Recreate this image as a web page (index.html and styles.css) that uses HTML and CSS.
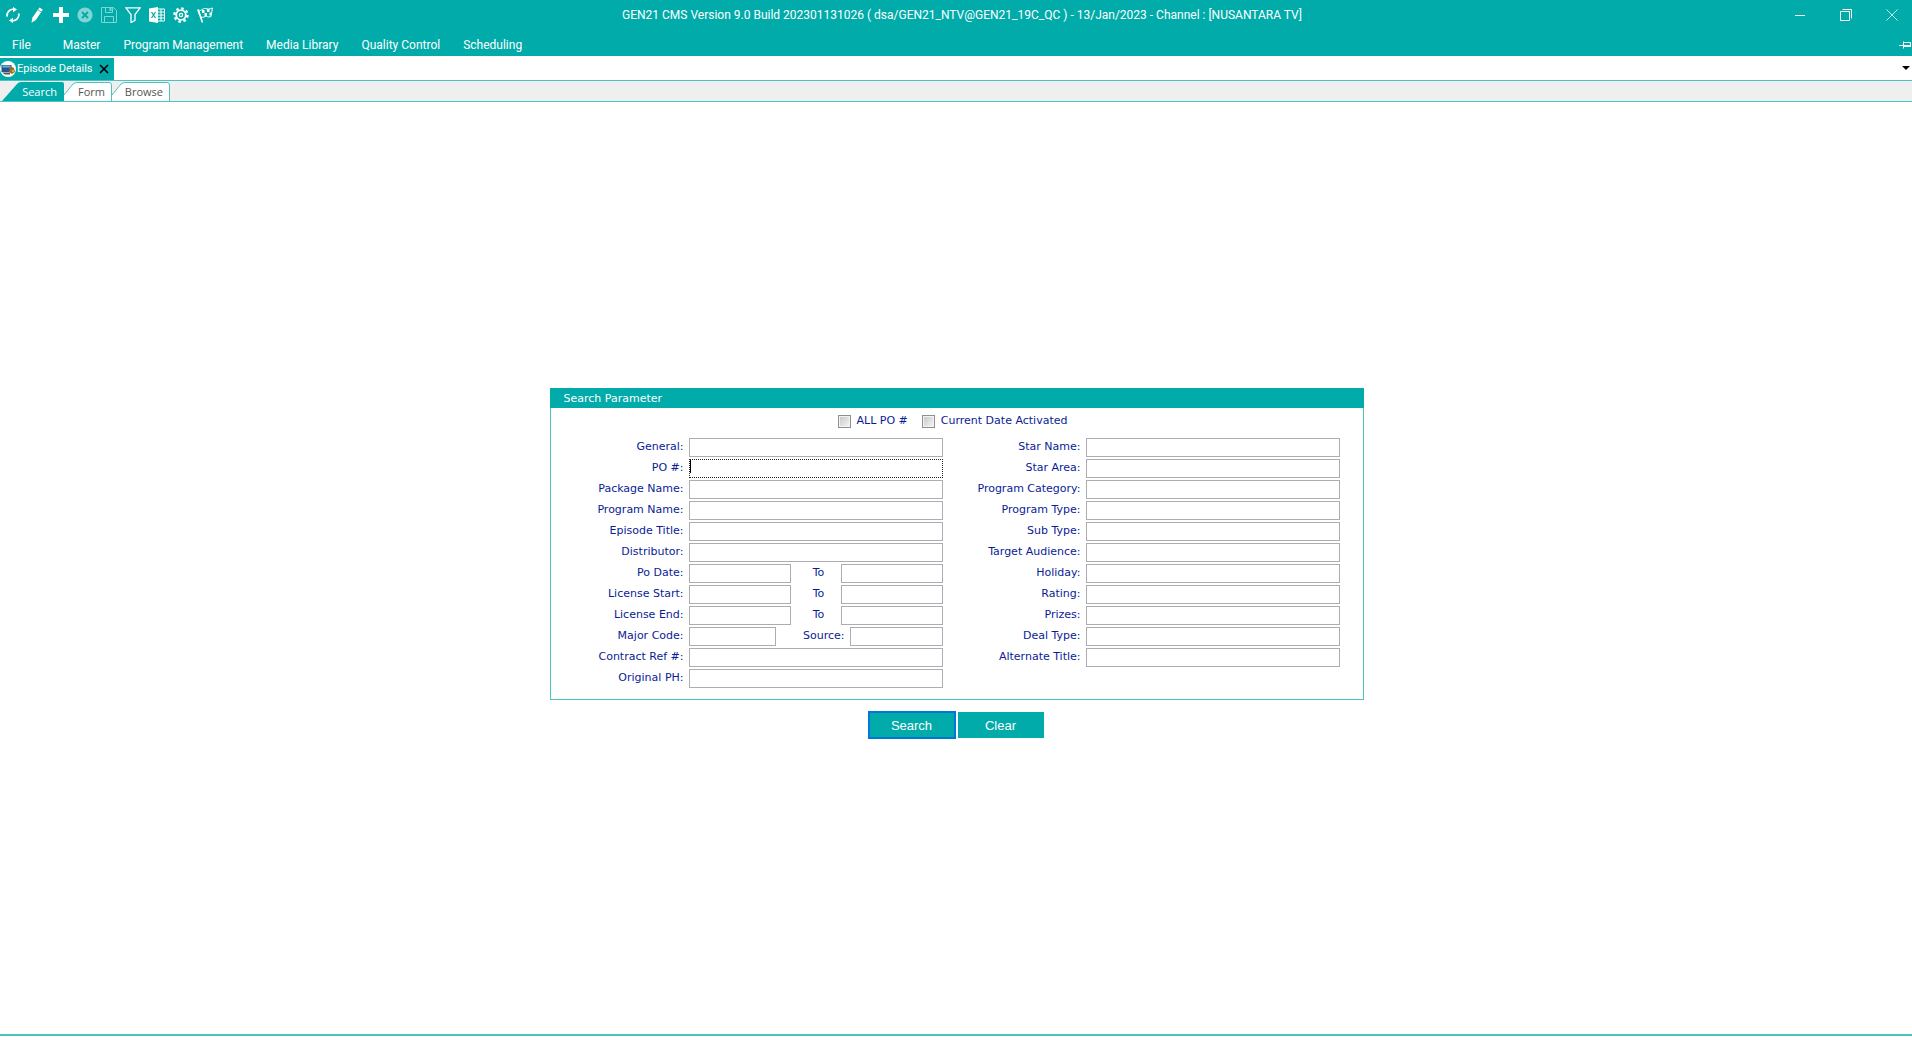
FILE: index.html
```html
<!DOCTYPE html>
<html lang="en">
<head>
<meta charset="utf-8">
<title>GEN21 CMS</title>
<link rel="stylesheet" href="styles.css">
</head>
<body>
<header class="app-header">
  <div class="title-bar">
    <div class="toolbar">
      <button class="tool" aria-label="Refresh"><svg viewBox="0 0 16 16"><path d="M2.2 9.6A6 6 0 0 1 8.6 2.3M13.8 6.4A6 6 0 0 1 7.4 13.7" fill="none" stroke="#fff" stroke-width="1.7"/><path d="M8 0l4 2.6L8 5.3zM8 10.7v5.3L4 13.4z" fill="#fff"/></svg></button>
      <button class="tool" aria-label="Edit"><svg viewBox="0 0 16 16"><path d="M10.500.5l3.300 2.200-7 10.200-4.300 2.800.8-5z" fill="#fff"/><path d="M9 2.800l3.400 2.300" stroke="#00abaa" stroke-width=".8"/></svg></button>
      <button class="tool" aria-label="Add"><svg viewBox="0 0 16 16"><path d="M6 0h4v6h6v4h-6v6H6v-6H0V6h6z" fill="#fff"/></svg></button>
      <button class="tool" aria-label="Cancel" disabled><svg viewBox="0 0 16 16"><circle cx="8" cy="8" r="7.6" fill="#7fd5d4"/><path d="M5 5l6 6M11 5l-6 6" stroke="#00abaa" stroke-width="1.8"/></svg></button>
      <button class="tool" aria-label="Save" disabled><svg viewBox="0 0 16 16" fill="none" stroke="#7fd5d4"><path d="M.5.5h12l3 3v12H.5zM4.500.5v5h7v-5M3.500 15.500v-6h9v6"/><path d="M9.500 1v3" stroke-width="2"/></svg></button>
      <button class="tool" aria-label="Filter"><svg viewBox="0 0 16 16"><path d="M.8.8h14.400L10 7.500v5.800l-4 2.200V7.500z" fill="none" stroke="#fff" stroke-width="1.300"/></svg></button>
      <button class="tool" aria-label="Export to Excel"><svg viewBox="0 0 16 16"><path d="M0 1.500L9 0v16l-9-1.500z" fill="#fff"/><path d="M2.500 5l4 6M6.500 5l-4 6" stroke="#00abaa" stroke-width="1.300"/><path d="M9 2h6.500v12H9M9 5h6M9 8h6M9 11h6M12 2v12" fill="none" stroke="#fff"/></svg></button>
      <button class="tool" aria-label="Settings"><svg viewBox="0 0 16 16" fill="none" stroke="#fff"><circle cx="8" cy="8" r="6.600" stroke-width="2.400" stroke-dasharray="2.600 2.580"/><circle cx="8" cy="8" r="4.800" stroke-width="1.800"/><circle cx="8" cy="8" r="1.600" stroke-width="1.200"/></svg></button>
      <button class="tool" aria-label="Finish"><svg viewBox="0 0 16 16" fill="none" stroke="#fff"><path d="M.8 2.500L5.500 15.500" stroke-width="1.600"/><path d="M1.500 3c3 1.500 4-2 7-1.500s3 1 7-.5l-1.500 8.500c-3 1.500-4-1-6 0s-2 1-4 .5z"/><path d="M5 3h2.500v3H5zM10 2h2.500v3H10zM7.500 6H10v3H7.500zM12.500 5.500H14v3h-1.500z" fill="#fff" stroke="none"/></svg></button>
    </div>
    <h1 class="app-title">GEN21 CMS Version 9.0 Build 202301131026 ( dsa/GEN21_NTV@GEN21_19C_QC ) - 13/Jan/2023 - Channel : [NUSANTARA TV]</h1>
    <div class="window-controls">
      <button class="win-btn" aria-label="Minimize"><svg viewBox="0 0 12 12"><path d="M1 6.500h10" stroke="#fff"/></svg></button>
      <button class="win-btn" aria-label="Restore"><svg viewBox="0 0 12 12"><path d="M.5 2.500h9v9h-9zM2.500.5h9v9" fill="none" stroke="#fff"/></svg></button>
      <button class="win-btn" aria-label="Close"><svg viewBox="0 0 12 12"><path d="M.5.5l11 11M11.500.5l-11 11" stroke="#c8eeed"/></svg></button>
    </div>
  </div>
  <nav class="menu-bar">
    <a class="menu-item menu-first" href="#">File</a>
    <a class="menu-item" href="#">Master</a>
    <a class="menu-item" href="#">Program Management</a>
    <a class="menu-item" href="#">Media Library</a>
    <a class="menu-item" href="#">Quality Control</a>
    <a class="menu-item" href="#">Scheduling</a>
    <button class="pin" aria-label="Pin menu"><svg viewBox="0 0 13 8"><path d="M0 4.500h4M4.500 0.500v7M5 1.500h6.500v4H5" fill="none" stroke="#fff"/><path d="M5 5h7" stroke="#fff" stroke-width="2"/></svg></button>
  </nav>
</header>

<div class="doc-tabs">
  <div class="doc-tab">
    <svg class="doc-icon" viewBox="0 0 16 16"><circle cx="8" cy="8" r="8" fill="#fff"/><path d="M1.500 4h10v7h-10z" fill="#23568c"/><path d="M2.500 4.500h8v2h-8z" fill="#6cb0dc"/><path d="M10 5l4 2 1 4-3 2-3-2z" fill="#94702f"/><circle cx="13" cy="10" r="1.200" fill="#d9a741"/><path d="M2 11.500h8v2H5z" fill="#555"/></svg>
    <span>Episode Details</span>
    <button class="doc-close" aria-label="Close tab"><svg viewBox="0 0 10 10"><path d="M1 1l8 8M9 1L1 9" stroke="#000" stroke-width="1.600"/></svg></button>
  </div>
  <button class="doc-list" aria-label="Open tabs"><svg viewBox="0 0 8 4"><path d="M0 0h8L4 4z"/></svg></button>
</div>

<div class="view-tabs">
  <button class="view-tab view-search"><svg viewBox="0 0 64 19"><path d="M2 19L17 2Q19 0 21 0H62Q64 0 64 2V19z" fill="#00abaa"/></svg><span>Search</span></button>
  <button class="view-tab view-form"><svg viewBox="0 0 48 19"><path d="M0 19V13L9 2Q11 .5 13 .5H45Q47.500.5 47.500 3V19z" fill="#fff"/><path d="M0 13L9 2Q11 .5 13 .5H45Q47.500.5 47.500 3V19" fill="none" stroke="#4dc2bf"/></svg><span>Form</span></button>
  <button class="view-tab view-browse"><svg viewBox="0 0 58 19"><path d="M0 19V13L9 2Q11 .5 13 .5H55Q57.500.5 57.500 3V19z" fill="#fff"/><path d="M0 13L9 2Q11 .5 13 .5H55Q57.500.5 57.500 3V19" fill="none" stroke="#4dc2bf"/></svg><span>Browse</span></button>
</div>

<main class="workspace">
  <form class="search-form">
    <section class="panel">
      <h2 class="panel-title">Search Parameter</h2>
      <div class="checks">
        <label class="check"><input type="checkbox"> ALL PO #</label>
        <label class="check"><input type="checkbox"> Current Date Activated</label>
      </div>
      <div class="columns">
        <div class="fields">
          <label for="general">General:</label><input id="general" type="text">
          <label for="po">PO #:</label><input id="po" class="current" type="text">
          <label for="package">Package Name:</label><input id="package" type="text">
          <label for="program">Program Name:</label><input id="program" type="text">
          <label for="episode">Episode Title:</label><input id="episode" type="text">
          <label for="distributor">Distributor:</label><input id="distributor" type="text">
          <label for="po-from">Po Date:</label><div class="range"><input id="po-from" type="text"><label for="po-to">To</label><input id="po-to" type="text"></div>
          <label for="start-from">License Start:</label><div class="range"><input id="start-from" type="text"><label for="start-to">To</label><input id="start-to" type="text"></div>
          <label for="end-from">License End:</label><div class="range"><input id="end-from" type="text"><label for="end-to">To</label><input id="end-to" type="text"></div>
          <label for="major">Major Code:</label><div class="codes"><input id="major" type="text"><label for="source">Source:</label><input id="source" type="text"></div>
          <label for="contract">Contract Ref #:</label><input id="contract" type="text">
          <label for="original">Original PH:</label><input id="original" type="text">
        </div>
        <div class="fields">
          <label for="star-name">Star Name:</label><input id="star-name" type="text">
          <label for="star-area">Star Area:</label><input id="star-area" type="text">
          <label for="category">Program Category:</label><input id="category" type="text">
          <label for="type">Program Type:</label><input id="type" type="text">
          <label for="sub-type">Sub Type:</label><input id="sub-type" type="text">
          <label for="audience">Target Audience:</label><input id="audience" type="text">
          <label for="holiday">Holiday:</label><input id="holiday" type="text">
          <label for="rating">Rating:</label><input id="rating" type="text">
          <label for="prizes">Prizes:</label><input id="prizes" type="text">
          <label for="deal">Deal Type:</label><input id="deal" type="text">
          <label for="alternate">Alternate Title:</label><input id="alternate" type="text">
        </div>
      </div>
    </section>
    <div class="actions">
      <button class="action action-default" type="button">Search</button>
      <button class="action" type="reset">Clear</button>
    </div>
  </form>
</main>
<footer class="status-bar"></footer>
</body>
</html>
```
FILE: styles.css
```css
:root {
  --teal: #00abaa;
  --line: #4dc2bf;
  --ui: Roboto, "Open Sans", sans-serif;
  --tabs: "Open Sans", "Noto Sans", sans-serif;
  --form: "DejaVu Sans", sans-serif;
}
* { box-sizing: border-box; }
body {
  margin: 0;
  min-height: 100vh;
  display: flex;
  flex-direction: column;
  background: #fff;
  font: 12px/16px var(--ui);
}
button { border: 0; padding: 0; background: none; font: inherit; color: inherit; }
svg { display: block; }

.app-header { background: var(--teal); color: #fff; }
.title-bar { display: grid; grid-template-columns: 1fr auto 1fr; align-items: center; height: 30px; }
.toolbar { display: flex; padding-left: 1px; }
.tool { width: 24px; height: 16px; display: grid; place-items: center; }
.tool svg { width: 16px; height: 16px; }
.app-title { margin: 0; padding-left: 12px; font-size: 12px; font-weight: 400; white-space: nowrap; }
.window-controls { display: flex; justify-content: flex-end; gap: 6px; }
.win-btn { width: 40px; height: 24px; display: grid; place-items: center; }
.win-btn svg { width: 12px; height: 12px; }
.menu-bar { display: flex; align-items: center; gap: 23px; height: 26px; padding: 4px 0 0 12px; }
.menu-item { color: #fff; text-decoration: none; white-space: nowrap; }
.menu-first { margin-right: 9px; }
.pin { margin-left: auto; }
.pin svg { width: 13px; height: 8px; }

.doc-tabs {
  display: flex;
  justify-content: space-between;
  align-items: center;
  height: 25px;
  border-bottom: 1px solid var(--line);
  padding-right: 2px;
}
.doc-tab {
  display: flex;
  align-items: center;
  align-self: flex-end;
  height: 22px;
  padding: 0 5px 0 0;
  background: var(--teal);
  color: #fff;
  font-size: 11px;
}
.doc-icon { width: 16px; height: 16px; margin-right: 1px; }
.doc-close { margin-left: 7px; }
.doc-close svg { width: 10px; height: 10px; }
.doc-list svg { width: 8px; height: 4px; }

.view-tabs {
  display: flex;
  align-items: flex-end;
  height: 21px;
  border-bottom: 1px solid var(--line);
  background: #efefef;
}
.view-tab { display: grid; height: 19px; color: #555; font: 11px/20px var(--tabs); text-align: right; }
.view-tab > * { grid-area: 1 / 1; }
.view-tab svg { height: 19px; }
.view-tab span { padding-right: 7px; }
.view-search { width: 64px; color: #fff; }
.view-form { width: 48px; }
.view-browse { width: 58px; }

.workspace {
  flex: 1;
  display: flex;
  justify-content: center;
  align-items: center;
  padding: 0 0 9px 1px;
}
.search-form { width: 100%; max-width: 814px; font: 11px/17px var(--form); color: #0a1c96; }
.panel { border: 1px solid var(--line); border-top: 0; padding-bottom: 11px; }
.panel-title {
  margin: 0 -1px;
  padding: 1px 14px 0;
  background: var(--teal);
  color: #fff;
  font-size: 11px;
  font-weight: 400;
  line-height: 19px;
}
.checks { display: flex; justify-content: center; gap: 14px; padding: 5px 8px 9px 0; }
.check { display: flex; align-items: center; gap: 6px; line-height: 16px; }
.check input {
  appearance: none;
  width: 13px;
  height: 13px;
  margin: 0;
  border: 1px solid #8e8f8f;
  background: linear-gradient(135deg, #c3c7ca, #f6f6f6);
  box-shadow: inset 0 0 0 1px #f4f4f4;
}
.columns { display: grid; grid-template-columns: 1fr 1fr; gap: 23px; padding: 0 23px 0 18px; }
.fields { display: grid; grid-template-columns: 1fr 254px; grid-auto-rows: 19px; align-content: start; gap: 2px 5px; }
.fields label { text-align: right; white-space: nowrap; }
.fields input { height: 19px; min-width: 0; border: 1px solid #abadb3; background: #fff; padding: 0 2px; font: inherit; outline: 0; }
.fields .current {
  border: 1px dotted #222;
  background: linear-gradient(#000, #000) 0 0 / 1px 13px no-repeat #fff;
}
.range { display: grid; grid-template-columns: 102px 1fr 102px; }
.range label { text-align: center; padding-left: 6px; }
.codes { display: grid; grid-template-columns: 87px 1fr 93px; }
.codes label { padding-right: 5px; }

.actions { display: flex; justify-content: center; align-items: center; gap: 2px; padding: 11px 2px 0 0; }
.action {
  width: 86px;
  height: 26px;
  padding-top: 1px;
  background: var(--teal);
  color: #fff;
  font: 13px/16px "Liberation Sans", Arial, sans-serif;
}
.action-default { width: 88px; height: 28px; border: 2px solid #0078d7; }

.status-bar { height: 6px; border-top: 2px solid var(--line); }
```
